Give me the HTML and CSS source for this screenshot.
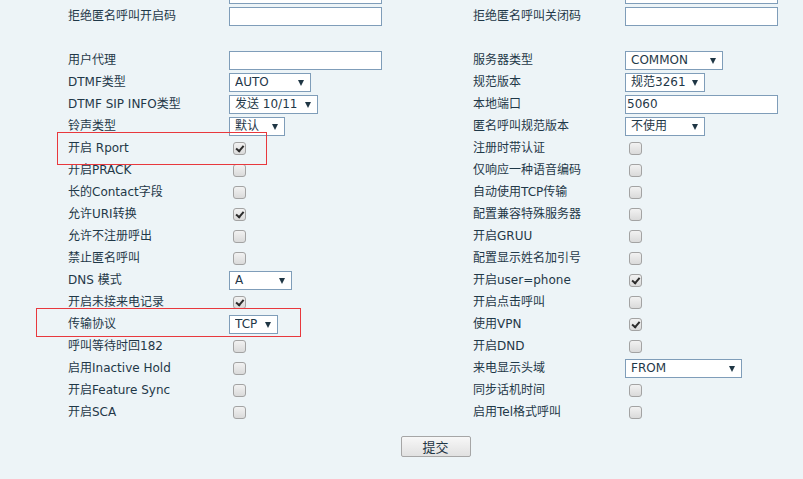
FILE: index.html
```html
<!DOCTYPE html>
<html lang="zh-CN">
<head>
<meta charset="utf-8">
<title>SIP 高级设置</title>
<link rel="stylesheet" href="styles.css">
</head>
<body>
<div class="page">
  <form class="form">
    <div class="grid">
      <div class="lbl"></div><div class="ctl"><input class="txt" type="text"></div>
      <div class="lbl"></div><div class="ctl"><input class="txt" type="text"></div>

      <div class="lbl">拒绝匿名呼叫开启码</div><div class="ctl"><input class="txt" type="text"></div>
      <div class="lbl">拒绝匿名呼叫关闭码</div><div class="ctl"><input class="txt" type="text"></div>

      <div class="lbl"></div><div class="ctl"></div>
      <div class="lbl"></div><div class="ctl"></div>

      <div class="lbl">用户代理</div><div class="ctl"><input class="txt" type="text"></div>
      <div class="lbl">服务器类型</div><div class="ctl"><span class="sel"><select class="w98"><option>COMMON</option></select></span></div>

      <div class="lbl">DTMF类型</div><div class="ctl"><span class="sel"><select class="w82"><option>AUTO</option></select></span></div>
      <div class="lbl">规范版本</div><div class="ctl"><span class="sel"><select class="w80"><option>规范3261</option></select></span></div>

      <div class="lbl">DTMF SIP INFO类型</div><div class="ctl"><span class="sel"><select class="w89"><option>发送 10/11</option></select></span></div>
      <div class="lbl">本地端口</div><div class="ctl"><input class="txt" type="text" value="5060"></div>

      <div class="lbl">铃声类型</div><div class="ctl"><span class="sel"><select class="w56"><option>默认</option></select></span></div>
      <div class="lbl">匿名呼叫规范版本</div><div class="ctl"><span class="sel"><select class="w80"><option>不使用</option></select></span></div>

      <div class="lbl">开启 Rport</div><div class="ctl"><input class="chk" type="checkbox" checked></div>
      <div class="lbl">注册时带认证</div><div class="ctl"><input class="chk" type="checkbox"></div>

      <div class="lbl">开启PRACK</div><div class="ctl"><input class="chk" type="checkbox"></div>
      <div class="lbl">仅响应一种语音编码</div><div class="ctl"><input class="chk" type="checkbox"></div>

      <div class="lbl">长的Contact字段</div><div class="ctl"><input class="chk" type="checkbox"></div>
      <div class="lbl">自动使用TCP传输</div><div class="ctl"><input class="chk" type="checkbox"></div>

      <div class="lbl">允许URI转换</div><div class="ctl"><input class="chk" type="checkbox" checked></div>
      <div class="lbl">配置兼容特殊服务器</div><div class="ctl"><input class="chk" type="checkbox"></div>

      <div class="lbl">允许不注册呼出</div><div class="ctl"><input class="chk" type="checkbox"></div>
      <div class="lbl">开启GRUU</div><div class="ctl"><input class="chk" type="checkbox"></div>

      <div class="lbl">禁止匿名呼叫</div><div class="ctl"><input class="chk" type="checkbox"></div>
      <div class="lbl">配置显示姓名加引号</div><div class="ctl"><input class="chk" type="checkbox"></div>

      <div class="lbl">DNS 模式</div><div class="ctl"><span class="sel"><select class="w63"><option>A</option></select></span></div>
      <div class="lbl">开启user=phone</div><div class="ctl"><input class="chk" type="checkbox" checked></div>

      <div class="lbl">开启未接来电记录</div><div class="ctl"><input class="chk" type="checkbox" checked></div>
      <div class="lbl">开启点击呼叫</div><div class="ctl"><input class="chk" type="checkbox"></div>

      <div class="lbl">传输协议</div><div class="ctl"><span class="sel"><select class="w49"><option>TCP</option></select></span></div>
      <div class="lbl">使用VPN</div><div class="ctl"><input class="chk" type="checkbox" checked></div>

      <div class="lbl">呼叫等待时回182</div><div class="ctl"><input class="chk" type="checkbox"></div>
      <div class="lbl">开启DND</div><div class="ctl"><input class="chk" type="checkbox"></div>

      <div class="lbl">启用Inactive Hold</div><div class="ctl"><input class="chk" type="checkbox"></div>
      <div class="lbl">来电显示头域</div><div class="ctl"><span class="sel"><select class="w117"><option>FROM</option></select></span></div>

      <div class="lbl">开启Feature Sync</div><div class="ctl"><input class="chk" type="checkbox"></div>
      <div class="lbl">同步话机时间</div><div class="ctl"><input class="chk" type="checkbox"></div>

      <div class="lbl">开启SCA</div><div class="ctl"><input class="chk" type="checkbox"></div>
      <div class="lbl">启用Tel格式呼叫</div><div class="ctl"><input class="chk" type="checkbox"></div>
    </div>
    <div class="actions">
      <button type="button" class="btn">提交</button>
    </div>
  </form>
  <div class="mark mark-rport"></div>
  <div class="mark mark-proto"></div>
</div>
</body>
</html>
```

FILE: styles.css
```css
html, body {
  margin: 0;
  padding: 0;
  background: #edf4f7;
}

body {
  font-family: "DejaVu Sans", "Noto Sans CJK SC", sans-serif;
  font-size: 12px;
  color: #1f3848;
  overflow: hidden;
}

.page {
  position: relative;
  display: flow-root;
  width: 803px;
  height: 479px;
  overflow: hidden;
}

.form {
  margin: -17px 0 0 0;
  padding-left: 68px;
}

.grid {
  display: grid;
  grid-template-columns: 161px 244px 152px 1fr;
  grid-auto-rows: 22px;
}

.lbl {
  display: flex;
  align-items: center;
  white-space: nowrap;
  line-height: 14px;
}

.ctl {
  display: flex;
  align-items: center;
}

.txt {
  box-sizing: border-box;
  width: 153px;
  height: 19px;
  margin: 0;
  padding: 0 1px;
  border: 1px solid #7f9db9;
  background: #fff;
  font: 12px "DejaVu Sans", "Noto Sans CJK SC", sans-serif;
  color: #1f3848;
  outline: none;
}

.sel {
  position: relative;
  display: inline-block;
  height: 19px;
}

.sel select {
  -webkit-appearance: none;
  appearance: none;
  box-sizing: border-box;
  height: 19px;
  margin: 0;
  padding: 0 0 0 5px;
  border: 1px solid #7f9db9;
  border-radius: 0;
  background: #fff;
  font: 12px "DejaVu Sans", "Noto Sans CJK SC", sans-serif;
  color: #1f3848;
  outline: none;
}

.sel::after {
  content: "";
  position: absolute;
  right: 7px;
  top: 7px;
  border-left: 3.5px solid transparent;
  border-right: 3.5px solid transparent;
  border-top: 6px solid #1f3644;
  pointer-events: none;
}

.w49 { width: 49px; }
.w56 { width: 56px; }
.w63 { width: 63px; }
.w80 { width: 80px; }
.w82 { width: 82px; }
.w89 { width: 89px; }
.w98 { width: 98px; }
.w117 { width: 117px; }

.chk {
  -webkit-appearance: none;
  appearance: none;
  box-sizing: border-box;
  width: 13px;
  height: 13px;
  margin: 0 0 0 4px;
  border: 1px solid #a3a3a3;
  border-radius: 3px;
  background: linear-gradient(#f2f2f2, #dadada);
  position: relative;
}

.chk:checked::after {
  content: "";
  position: absolute;
  left: 2px;
  top: 1px;
  width: 3px;
  height: 6px;
  border-right: 2px solid #2b2b2b;
  border-bottom: 2px solid #2b2b2b;
  transform: rotate(40deg) translate(1px, -1px);
}

.actions {
  display: flex;
  justify-content: center;
  margin-top: 13px;
}

.btn {
  width: 70px;
  height: 21px;
  padding: 0;
  border: 1px solid #a6a6a6;
  border-radius: 2px;
  background: linear-gradient(#f7f7f7, #e1e1e1);
  font: 13px "Noto Sans CJK SC", sans-serif;
  color: #1f3644;
  line-height: 19px;
}

.mark {
  position: absolute;
  border: 1px solid #e8383d;
  pointer-events: none;
}

.mark-rport {
  left: 57px;
  top: 132px;
  width: 208px;
  height: 31px;
}

.mark-proto {
  left: 36px;
  top: 308px;
  width: 263px;
  height: 27px;
}
```
